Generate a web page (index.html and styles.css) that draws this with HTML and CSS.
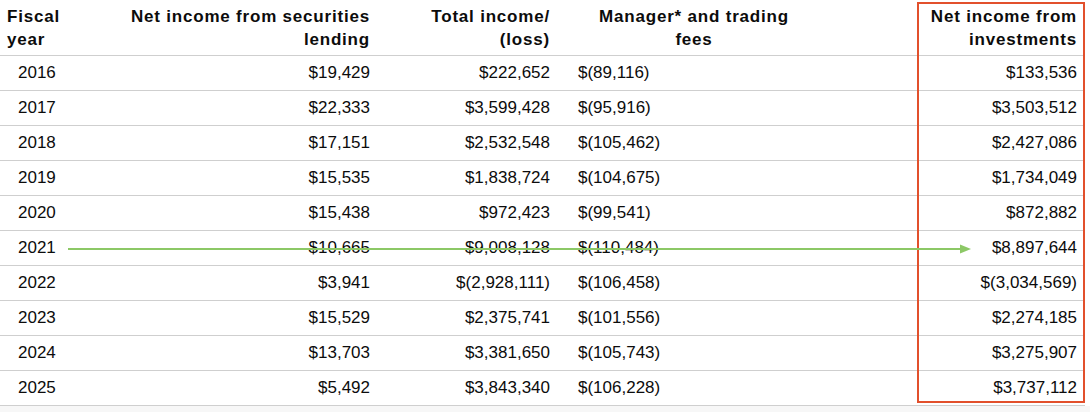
FILE: index.html
```html
<!DOCTYPE html>
<html>
<head>
<meta charset="utf-8">
<link rel="stylesheet" href="styles.css">
</head>
<body>
<div class="wrap">
  <table class="fees">
    <colgroup>
      <col class="c1"><col class="c2"><col class="c3"><col class="c4"><col class="c5">
    </colgroup>
    <thead>
      <tr>
        <th class="year">Fiscal<br>year</th>
        <th class="num">Net income from securities<br>lending</th>
        <th class="num">Total income/<br>(loss)</th>
        <th class="mgr">Manager* and trading<br>fees</th>
        <th class="num last">Net income from<br>investments</th>
      </tr>
    </thead>
    <tbody>
      <tr><td class="year">2016</td><td class="num">$19,429</td><td class="num">$222,652</td><td class="mgr">$(89,116)</td><td class="num last">$133,536</td></tr>
      <tr><td class="year">2017</td><td class="num">$22,333</td><td class="num">$3,599,428</td><td class="mgr">$(95,916)</td><td class="num last">$3,503,512</td></tr>
      <tr><td class="year">2018</td><td class="num">$17,151</td><td class="num">$2,532,548</td><td class="mgr">$(105,462)</td><td class="num last">$2,427,086</td></tr>
      <tr><td class="year">2019</td><td class="num">$15,535</td><td class="num">$1,838,724</td><td class="mgr">$(104,675)</td><td class="num last">$1,734,049</td></tr>
      <tr><td class="year">2020</td><td class="num">$15,438</td><td class="num">$972,423</td><td class="mgr">$(99,541)</td><td class="num last">$872,882</td></tr>
      <tr><td class="year">2021</td><td class="num">$10,665</td><td class="num">$9,008,128</td><td class="mgr">$(110,484)</td><td class="num last">$8,897,644</td></tr>
      <tr><td class="year">2022</td><td class="num">$3,941</td><td class="num">$(2,928,111)</td><td class="mgr">$(106,458)</td><td class="num last">$(3,034,569)</td></tr>
      <tr><td class="year">2023</td><td class="num">$15,529</td><td class="num">$2,375,741</td><td class="mgr">$(101,556)</td><td class="num last">$2,274,185</td></tr>
      <tr><td class="year">2024</td><td class="num">$13,703</td><td class="num">$3,381,650</td><td class="mgr">$(105,743)</td><td class="num last">$3,275,907</td></tr>
      <tr><td class="year">2025</td><td class="num">$5,492</td><td class="num">$3,843,340</td><td class="mgr">$(106,228)</td><td class="num last">$3,737,112</td></tr>
    </tbody>
  </table>
  <div class="highlight"></div>
  <svg class="arrow" width="910" height="12" viewBox="0 0 910 12">
    <line x1="0" y1="6" x2="894" y2="6" stroke="#8cc866" stroke-width="2"/>
    <polygon points="892,1.5 903,6 892,10.5" fill="#8cc866"/>
  </svg>
</div>
</body>
</html>
```

FILE: styles.css
```css
html, body {
  margin: 0;
  padding: 0;
  background: #f7f7f7;
}

.wrap {
  position: relative;
  width: 1090px;
  height: 406px;
  background: #ffffff;
  font-family: "Liberation Sans", Arial, sans-serif;
  color: #0c0c0c;
}

.fees {
  border-collapse: collapse;
  table-layout: fixed;
  width: 1085px;
}

.c1 { width: 120px; }
.c2 { width: 260px; }
.c3 { width: 180px; }
.c4 { width: 358px; }
.c5 { width: 167px; }

.fees th {
  height: 55px;
  padding: 0;
  font-size: 17px;
  font-weight: bold;
  line-height: 23px;
  letter-spacing: 0.8px;
  vertical-align: middle;
  border-bottom: 1px solid #cfcfcf;
}

.fees td {
  height: 34px;
  padding: 0;
  font-size: 17px;
  line-height: 20px;
  vertical-align: middle;
  border-bottom: 1px solid #cfcfcf;
  white-space: nowrap;
}

.fees th.year {
  text-align: left;
  padding-left: 7px;
}

.fees td.year {
  text-align: left;
  padding-left: 18px;
}

.fees .num {
  text-align: right;
  padding-right: 10px;
}

.fees .num.last {
  padding-right: 8px;
}

.fees th.mgr {
  text-align: center;
  padding-left: 8px;
  padding-right: 98px;
}

.fees td.mgr {
  text-align: left;
  padding-left: 18px;
}

.highlight {
  position: absolute;
  left: 917px;
  top: 2px;
  width: 164px;
  height: 397px;
  border: 2px solid #e2502c;
}

.arrow {
  position: absolute;
  left: 68px;
  top: 243px;
}
```
